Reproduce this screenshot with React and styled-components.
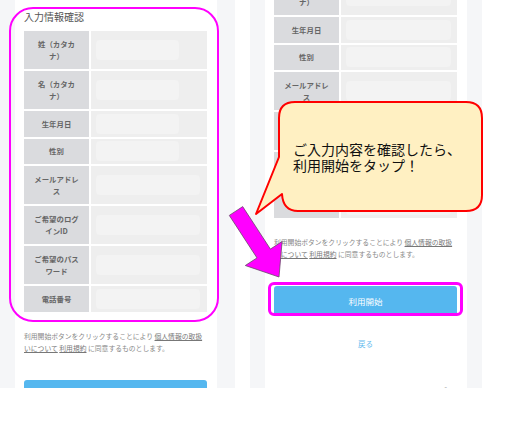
import styled, { createGlobalStyle } from "styled-components";

const GlobalStyle = createGlobalStyle`
  html, body {
    margin: 0;
    padding: 0;
    background: #fff;
  }
  body {
    font-family: "Noto Sans CJK JP", "Noto Sans", sans-serif;
    text-spacing-trim: space-all;
  }
`;

const fields = [
  { label: "姓（カタカナ）", box: [83, 105] },
  { label: "名（カタカナ）", box: [83, 105] },
  { label: "生年月日", box: [83, 105] },
  { label: "性別", box: [83, 105] },
  { label: "メールアドレス", box: [104, 105] },
  { label: "ご希望のログインID", box: [104, 105] },
  { label: "ご希望のパスワード", box: [104, 105] },
  { label: "電話番号", box: [104, 105] },
];

const Page = styled.div`
  position: relative;
  width: 516px;
  height: 438px;
  display: flex;
  gap: 15px;
  align-items: flex-start;
  overflow: hidden;
`;

const Screen = styled.div`
  flex-shrink: 0;
  width: ${(p) => p.$width}px;
  height: 388px;
  background: #f5f6f8;
  overflow: hidden;
`;

const Column = styled.div`
  box-sizing: border-box;
  width: 202px;
  margin-left: 15px;
  margin-top: ${(p) => -p.$scroll}px;
  padding: 10px 10px 40px 9px;
  background: #fff;
`;

const Title = styled.div`
  font-size: 10px;
  line-height: 14px;
  color: #555;
  margin-bottom: 7px;
`;

const Table = styled.div`
  display: grid;
  grid-template-columns: 65px 116px;
  gap: 2px;
`;

const Label = styled.div`
  display: flex;
  align-items: center;
  justify-content: center;
  text-align: center;
  padding: 6.5px 8px;
  background: #dadbde;
  color: #666;
  font-size: 7.4px;
  font-weight: bold;
  line-height: 12.5px;
  text-spacing-trim: space-all;
`;

const Value = styled.div`
  display: flex;
  align-items: center;
  padding-left: 5px;
  background: #eeeeee;
`;

const ValueBox = styled.div`
  width: ${(p) => p.$w}px;
  height: 20px;
  border-radius: 4px;
  background: #f3f3f3;
`;

const Note = styled.p`
  margin: 18px 0 0;
  font-size: 6.8px;
  line-height: 12px;
  color: #888;
`;

const NoteLink = styled.span`
  color: #777;
  text-decoration: underline;
`;

const StartButton = styled.div`
  margin-top: 26px;
  height: 30px;
  display: flex;
  align-items: center;
  justify-content: center;
  border-radius: 3px;
  background: #55b7ef;
  color: #fff;
  font-size: 8.5px;
`;

const Back = styled.div`
  margin-top: 22px;
  text-align: center;
  font-size: 7.5px;
  line-height: 12px;
  color: #66bbee;
`;

const Footer = styled.div`
  margin-top: 35px;
  padding-right: 3px;
  text-align: right;
  font-size: 10px;
  line-height: 14px;
  color: #aaa;
`;

const Highlight = styled.div`
  position: absolute;
  box-sizing: border-box;
  left: ${(p) => p.$x}px;
  top: ${(p) => p.$y}px;
  width: ${(p) => p.$w}px;
  height: ${(p) => p.$h}px;
  border: ${(p) => p.$bw}px solid #ff00ff;
  border-radius: ${(p) => p.$r}px;
  pointer-events: none;
`;

const Overlay = styled.svg`
  position: absolute;
  left: 0;
  top: 0;
  pointer-events: none;
`;

const CalloutText = styled.div`
  position: absolute;
  left: 293px;
  top: 141px;
  font-size: 14px;
  line-height: 16px;
  color: #111;
  white-space: nowrap;
`;

const PhoneScreen = ({ width, scroll, variant }) => (
  <Screen $width={width}>
    <Column $scroll={scroll}>
      <Title>入力情報確認</Title>
      <Table>
        {fields.map(({ label, box }) => [
          <Label key={label + "l"}>{label}</Label>,
          <Value key={label + "v"}>
            <ValueBox $w={box[variant]} />
          </Value>,
        ])}
      </Table>
      <Note>
        利用開始ボタンをクリックすることにより <NoteLink>個人情報の取扱いについて</NoteLink>{" "}
        <NoteLink>利用規約</NoteLink> に同意するものとします。
      </Note>
      <StartButton>利用開始</StartButton>
      <Back>戻る</Back>
      <Footer>« ページトップ »</Footer>
    </Column>
  </Screen>
);

export default function App() {
  return (
    <>
      <GlobalStyle />
      <Page>
        <PhoneScreen width={235} scroll={0} variant={0} />
        <PhoneScreen width={232} scroll={94} variant={1} />

        <Highlight $x={9} $y={7} $w={210} $h={315} $r={24} $bw={2.5} />
        <Highlight $x={268} $y={282} $w={195} $h={34} $r={6} $bw={3} />

        <Overlay width="516" height="438" viewBox="0 0 516 438">
          <path
            d="M295 102 H466 Q482 102 482 118 V195 Q482 211 466 211 H298 Q283 211 282 194 L256 214 L279 157 V118 Q279 102 295 102 Z"
            fill="#fff0c2"
            stroke="#ff0000"
            strokeWidth="2"
            strokeLinejoin="round"
          />
          <polygon
            points="229.3,215.4 242.7,206.6 270.4,249.1 282.1,241.5 279,277 245.3,265.5 257,257.9"
            fill="#ff00ff"
            stroke="#6a4a6a"
            strokeWidth="0.8"
          />
        </Overlay>
        <CalloutText>
          ご入力内容を確認したら、
          <br />
          利用開始をタップ！
        </CalloutText>
      </Page>
    </>
  );
}
